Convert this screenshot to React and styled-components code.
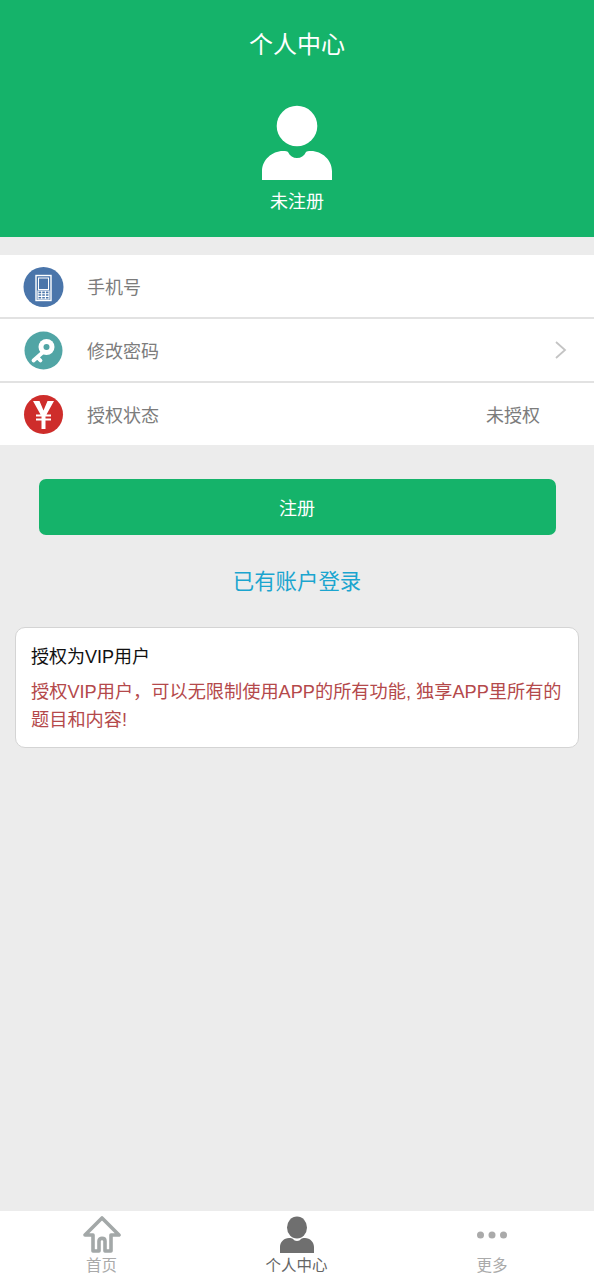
import React from 'react';
import styled, { createGlobalStyle } from 'styled-components';

const Global = createGlobalStyle`
  html, body { margin: 0; padding: 0; background: #ececec; }
  * { box-sizing: border-box; }
  body { font-family: "Liberation Sans", "Noto Sans CJK SC", sans-serif; }
`;

const Page = styled.div`
  width: 594px;
  height: 1280px;
  display: flex;
  flex-direction: column;
  background: #ececec;
  overflow: hidden;
`;

const Header = styled.header`
  height: 237px;
  background: #15b36a;
  display: flex;
  flex-direction: column;
  align-items: center;
  color: #fff;
`;

const Title = styled.h1`
  margin: 27px 0 0;
  font-size: 24px;
  line-height: 36px;
  font-weight: 400;
`;

const Avatar = styled.svg`
  display: block;
  width: 70px;
  height: 76px;
  margin-top: 42px;
`;

const UserName = styled.div`
  margin-top: 8px;
  font-size: 18px;
  line-height: 26px;
`;

const List = styled.section`
  margin-top: 18px;
  display: flex;
  flex-direction: column;
  gap: 2px;
  background: #e2e2e2;
`;

const Row = styled.div`
  height: 62px;
  background: #fff;
  display: flex;
  align-items: center;
  padding-left: 23px;
  color: #7c7c7c;
  font-size: 18px;
`;

const RowIcon = styled.svg`
  width: 41px;
  height: 41px;
  flex: none;
`;

const RowLabel = styled.span`
  margin-left: 23px;
  flex: 1;
`;

const RowValue = styled.span`
  margin-right: 54px;
`;

const Chevron = styled.svg`
  width: 14px;
  height: 20px;
  margin-right: 26px;
`;

const RegisterButton = styled.button`
  display: block;
  width: 517px;
  height: 56px;
  margin: 34px auto 0;
  border: 0;
  border-radius: 7px;
  background: #15b36a;
  color: #fff;
  font: inherit;
  font-size: 18px;
`;

const LoginLink = styled.a`
  display: block;
  margin-top: 30px;
  text-align: center;
  color: #1ba5cf;
  font-size: 21.4px;
  line-height: 34px;
`;

const Card = styled.section`
  margin: 28px 15px 0;
  height: 121px;
  padding: 13px 15px 0;
  background: #fff;
  border: 1px solid #d4d4d4;
  border-radius: 10px;
`;

const CardTitle = styled.div`
  color: #111;
  font-size: 18px;
  line-height: 32px;
`;

const CardText = styled.div`
  margin-top: 5px;
  color: #b4494b;
  font-size: 18.2px;
  line-height: 28px;
`;

const Spacer = styled.div`
  flex: 1;
`;

const TabBar = styled.nav`
  height: 69px;
  background: #fff;
  display: grid;
  grid-template-columns: 203px 187px 204px;
`;

const Tab = styled.div`
  display: flex;
  flex-direction: column;
  align-items: center;
  color: ${p => (p.$active ? '#666' : '#aaa')};
  font-size: 15.5px;
  line-height: 20px;
`;

const TabIcon = styled.svg`
  width: 40px;
  height: 38px;
  margin-top: 5px;
  margin-bottom: 2px;
`;

const PhoneIcon = () => (
  <RowIcon viewBox="0 -0.5 41 41">
    <circle cx="20.5" cy="20.5" r="20" fill="#4a75aa" />
    <rect x="13" y="9" width="15" height="25" fill="none" stroke="#fff" strokeWidth="1.4" />
    <rect x="15.5" y="11.5" width="10" height="11.500" fill="none" stroke="#fff" strokeWidth="1" />
    <path d="M15 24.500h11v8h-11zM15 27.200h11M15 29.900h11M18.700 24.500v8M22.400 24.500v8" fill="none" stroke="#fff" strokeWidth="1.100" />
  </RowIcon>
);

const KeyIcon = () => (
  <RowIcon viewBox="0 0 41 41">
    <circle cx="20.5" cy="20.5" r="19" fill="#51a5a5" />
    <path d="M19 23L10.500 30.500M14.500 27.500l3 3" fill="none" stroke="#fff" strokeWidth="3.800" strokeLinecap="round" />
    <circle cx="23.5" cy="17" r="8" fill="#fff" />
    <circle cx="23.5" cy="17" r="3" fill="#51a5a5" />
  </RowIcon>
);

const YenIcon = () => (
  <RowIcon viewBox="0 0 41 41">
    <circle cx="20.5" cy="20.5" r="19.5" fill="#ce2d2b" />
    <path fill="#fff" d="M10 7h6.500l4 9.500 4-9.500H31l-7.500 13.500H28v2h-5.500v2H28v2h-5.500V35h-4v-8.500H13v-2h5.500v-2H13v-2h4.500z" />
  </RowIcon>
);

export default function App() {
  return (
    <Page>
      <Global />
      <Header>
        <Title>个人中心</Title>
        <Avatar viewBox="0 0 70 76">
          <circle cx="35" cy="21" r="20.300" fill="#fff" />
          <path fill="#fff" d="M0 75V66C0 55 10 46 21 46c3 0 4 0 5 1 2 4 5 6 9 6s7-2 9-6c1-1 2-1 5-1 11 0 21 9 21 20v9z" />
        </Avatar>
        <UserName>未注册</UserName>
      </Header>

      <List>
        <Row>
          <PhoneIcon />
          <RowLabel>手机号</RowLabel>
        </Row>
        <Row>
          <KeyIcon />
          <RowLabel>修改密码</RowLabel>
          <Chevron viewBox="0 0 14 20">
            <path d="M2 2l9 8-9 8" fill="none" stroke="#c4c4c4" strokeWidth="1.800" />
          </Chevron>
        </Row>
        <Row>
          <YenIcon />
          <RowLabel>授权状态</RowLabel>
          <RowValue>未授权</RowValue>
        </Row>
      </List>

      <RegisterButton>注册</RegisterButton>
      <LoginLink>已有账户登录</LoginLink>

      <Card>
        <CardTitle>授权为VIP用户</CardTitle>
        <CardText>授权VIP用户，可以无限制使用APP的所有功能, 独享APP里所有的题目和内容!</CardText>
      </Card>

      <Spacer />

      <TabBar>
        <Tab>
          <TabIcon viewBox="0 0 40 38">
            <path d="M11 35V19H3L20 2l17 17h-8v16h-6V25c0-3.500-6-3.500-6 0v10z" fill="none" stroke="#a3a8a8" strokeWidth="3.600" strokeLinejoin="round" />
          </TabIcon>
          首页
        </Tab>
        <Tab $active>
          <TabIcon viewBox="0 0 40 38">
            <ellipse cx="20" cy="11.500" rx="10" ry="11" fill="#6f6f6f" />
            <path fill="#6f6f6f" d="M3 37v-6c0-5 4-9 9-9 2 0 3 0 4 1 1 1 2 2 4 2s3-1 4-2c1-1 2-1 4-1 5 0 9 4 9 9v6z" />
          </TabIcon>
          个人中心
        </Tab>
        <Tab>
          <TabIcon viewBox="0 0 40 38">
            <circle cx="8.500" cy="19" r="3.500" fill="#aaa" />
            <circle cx="20" cy="19" r="3.500" fill="#aaa" />
            <circle cx="31.500" cy="19" r="3.500" fill="#aaa" />
          </TabIcon>
          更多
        </Tab>
      </TabBar>
    </Page>
  );
}
